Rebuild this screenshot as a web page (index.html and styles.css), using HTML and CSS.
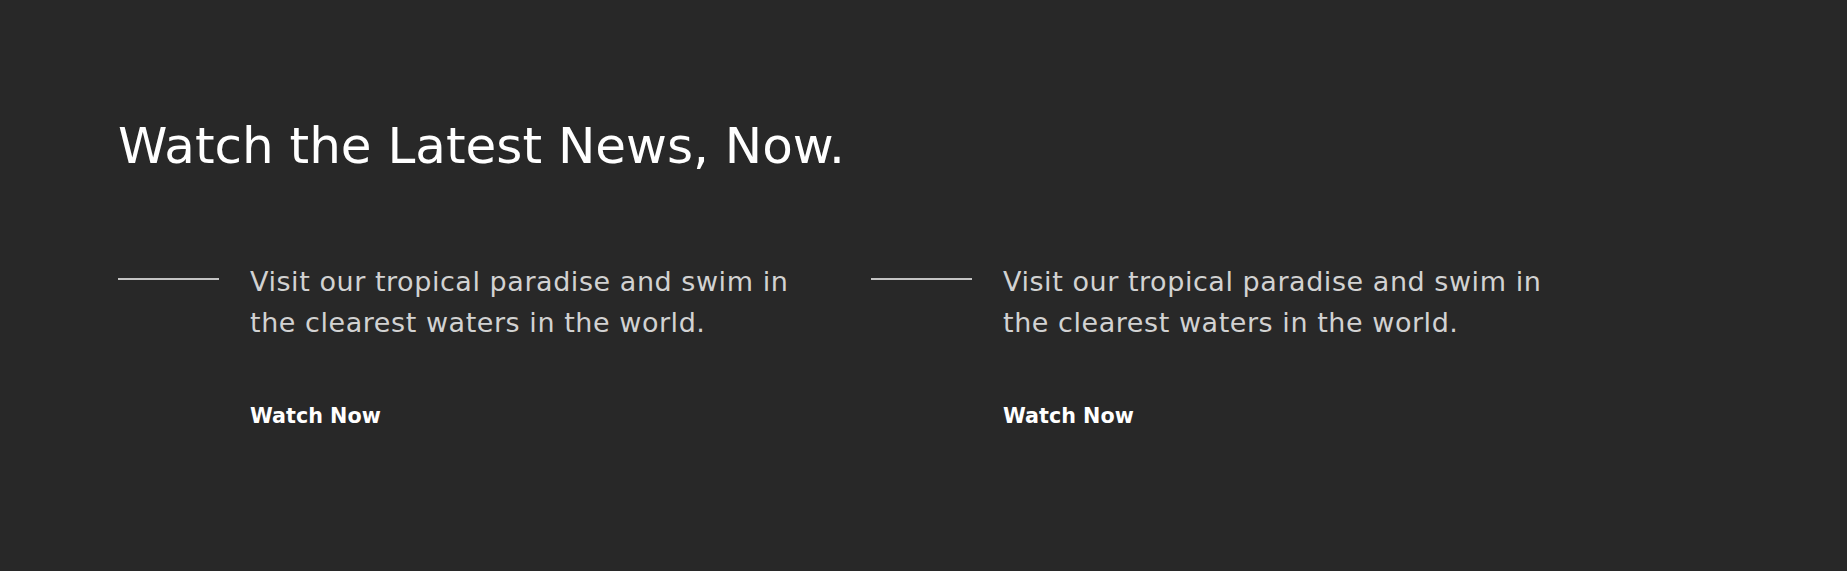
FILE: index.html
```html
<!DOCTYPE html>
<html lang="en">
<head>
<meta charset="utf-8">
<title>Watch the Latest News, Now.</title>
<link rel="stylesheet" href="styles.css">
</head>
<body>
<section class="news">
  <h1 class="news-title">Watch the Latest News, Now.</h1>
  <div class="cards">
    <article class="card">
      <span class="rule"></span>
      <div class="card-body">
        <p class="card-text">Visit our tropical paradise and swim in the clearest waters in the world.</p>
        <a class="card-link" href="#">Watch Now</a>
      </div>
    </article>
    <article class="card">
      <span class="rule"></span>
      <div class="card-body">
        <p class="card-text">Visit our tropical paradise and swim in the clearest waters in the world.</p>
        <a class="card-link" href="#">Watch Now</a>
      </div>
    </article>
  </div>
</section>
</body>
</html>
```
FILE: styles.css
```css
html, body {
  margin: 0;
  padding: 0;
  background: #282828;
}
body {
  width: 1847px;
  height: 571px;
  overflow: hidden;
  font-family: "DejaVu Sans", "Open Sans", sans-serif;
}
.news {
  padding: 121px 0 0 118px;
}
.news-title {
  margin: 0;
  font-size: 50px;
  line-height: 1;
  font-weight: 400;
  letter-spacing: 0;
  color: #ffffff;
}
.cards {
  display: flex;
  margin-top: 90px;
}
.card {
  display: flex;
  width: 753px;
}
.rule {
  display: block;
  flex: none;
  width: 101px;
  height: 2px;
  margin-top: 17px;
  margin-right: 31px;
  background: #c4c4c4;
}
.card-body {
  display: flex;
  flex-direction: column;
  align-items: flex-start;
}
.card-text {
  margin: 0;
  width: 570px;
  font-size: 27px;
  line-height: 41px;
  letter-spacing: 0.55px;
  color: #d2d2d2;
}
.card-link {
  margin-top: 63px;
  font-size: 20.7px;
  line-height: 1;
  font-weight: 700;
  color: #ffffff;
  text-decoration: none;
}
```
